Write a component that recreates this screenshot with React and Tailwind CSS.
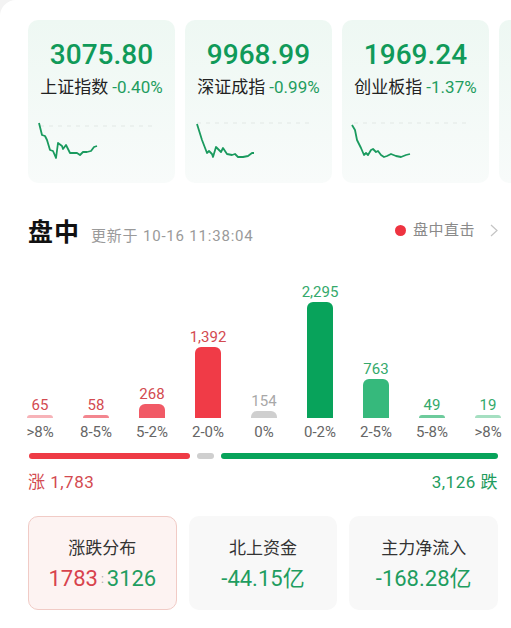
const indices = [
  {
    value: '3075.80',
    name: '上证指数',
    change: '-0.40%',
    dash: 8,
    points: '3,5 6,17 9,18 11,22 14,32 17,33 20,40 22,25 26,28 27,31 30,27 34,35 37,35 41,35 44,37 47,34 51,34 55,33 58,29 61,28',
  },
  {
    value: '9968.99',
    name: '深证成指',
    change: '-0.99%',
    dash: 5,
    points: '4,6 9,22 14,35 16,33 19,36 20,39 23,29 25,31 28,34 30,30 34,36 39,37 42,36 45,39 50,39 55,38 59,35 61,35',
  },
  {
    value: '1969.24',
    name: '创业板指',
    change: '-1.37%',
    dash: 5,
    points: '2,7 5,12 7,22 11,30 14,37 16,35 18,37 21,32 23,31 26,34 28,33 31,37 34,39 37,38 41,36 46,38 51,39 56,37 60,36',
  },
]

const buckets = [
  { label: '>8%', count: '65', h: 3, bar: 'bg-[#f7b3b8]', text: 'text-[#d34a50]' },
  { label: '8-5%', count: '58', h: 3, bar: 'bg-[#f3868f]', text: 'text-[#d34a50]' },
  { label: '5-2%', count: '268', h: 14, bar: 'bg-[#f15a66]', text: 'text-[#d34a50]' },
  { label: '2-0%', count: '1,392', h: 71, bar: 'bg-[#f03b47]', text: 'text-[#d34a50]' },
  { label: '0%', count: '154', h: 7, bar: 'bg-[#cfcfcf]', text: 'text-[#a8a8a8]' },
  { label: '0-2%', count: '2,295', h: 116, bar: 'bg-[#08a35b]', text: 'text-[#34a96b]' },
  { label: '2-5%', count: '763', h: 39, bar: 'bg-[#36b97c]', text: 'text-[#34a96b]' },
  { label: '5-8%', count: '49', h: 3, bar: 'bg-[#6dcb9c]', text: 'text-[#34a96b]' },
  { label: '>8%', count: '19', h: 3, bar: 'bg-[#a5dfc1]', text: 'text-[#34a96b]' },
]

function IndexCard({ item }) {
  return (
    <div className="w-[147px] h-[163px] shrink-0 rounded-[10px] bg-gradient-to-b from-[#eef8f3] to-[#f8fbfa] pt-[21px] flex flex-col">
      <div className="text-center text-[28px] leading-[28px] font-medium text-[#109a59]">{item.value}</div>
      <div className="mt-[8px] text-center text-[17px] leading-[20px] whitespace-nowrap">
        <span className="text-[#222]">{item.name}</span>
        <span className="text-[#1f9d60] ml-[4px]">{item.change}</span>
      </div>
      <svg className="mt-[21px] ml-[8px]" width="130" height="45" viewBox="0 0 130 45">
        <line x1="4" y1={item.dash} x2="120" y2={item.dash} stroke="#e2e8e5" strokeWidth="1" strokeDasharray="4 5" />
        <polyline points={item.points} fill="none" stroke="#1a9a5e" strokeWidth="1.8" strokeLinejoin="round" />
      </svg>
    </div>
  )
}

export default function App() {
  return (
    <div
      className="w-[511px] h-[628px] bg-[#f3f3f3] overflow-hidden"
      style={{ fontFamily: "Roboto, 'Noto Sans CJK SC', sans-serif" }}
    >
      <div className="w-full h-full bg-white rounded-tl-[16px] pl-[28px] pr-[13px]">
        {/* index cards */}
        <div className="pt-[20px] flex gap-[10px] -mr-[13px] overflow-hidden">
          {indices.map(item => <IndexCard key={item.name} item={item} />)}
          <div className="w-[147px] h-[163px] shrink-0 rounded-[10px] bg-gradient-to-b from-[#eef8f3] to-[#f8fbfa]" />
        </div>

        {/* header */}
        <div className="mt-[35px] h-[30px] flex items-center justify-between">
          <div className="flex items-baseline">
            <span className="text-[25px] leading-[30px] font-bold text-[#111] tracking-[1px]">盘中</span>
            <span className="ml-[11px] text-[15px] text-[#9a9a9a] tracking-[0.8px]">更新于 10-16 11:38:04</span>
          </div>
          <div className="flex items-center -mt-[6px]">
            <span className="w-[11px] h-[11px] rounded-full bg-[#ee3340]" />
            <span className="ml-[7px] text-[15px] text-[#8a8a8a] tracking-[0.5px]">盘中直击</span>
            <svg className="ml-[15px]" width="8" height="13" viewBox="0 0 8 13">
              <path d="M1 1 L7 6.5 L1 12" fill="none" stroke="#c4c4c4" strokeWidth="1.2" />
            </svg>
          </div>
        </div>

        {/* distribution chart */}
        <div className="mt-[13px] h-[179px] -ml-[1px] -mr-[3px] flex items-end justify-between">
          {buckets.map((b, i) => (
            <div key={i} className="w-[26px] flex flex-col items-center">
              <span className={`text-[15px] leading-[16px] whitespace-nowrap mb-[2px] ${b.text}`}>{b.count}</span>
              <div className={`w-[26px] rounded-t-[6px] ${b.bar}`} style={{ height: b.h }} />
              <span className="mt-[6px] text-[15px] leading-[16px] whitespace-nowrap text-[#666]">{b.label}</span>
            </div>
          ))}
        </div>

        {/* ratio bar */}
        <div className="mt-[13px] flex gap-[7px] ml-[1px]">
          <div className="w-[161px] h-[6px] rounded-full bg-[#ee3b45]" />
          <div className="w-[17px] h-[6px] rounded-full bg-[#cfcfcf]" />
          <div className="flex-1 h-[6px] rounded-full bg-[#07a35a]" />
        </div>
        <div className="mt-[13px] flex justify-between text-[17px] leading-[20px] tracking-[0.5px]">
          <span className="text-[#d34a50]">涨 1,783</span>
          <span className="text-[#1f9d60]">3,126 跌</span>
        </div>

        {/* summary cards */}
        <div className="mt-[24px] grid grid-cols-3 gap-[12px]">
          <div className="h-[94px] rounded-[10px] bg-[#fdf3f2] border border-[#f1cbc6] pt-[20px] flex flex-col items-center">
            <span className="text-[17px] leading-[22px] text-[#333]">涨跌分布</span>
            <div className="mt-[7px] text-[22px] leading-[26px] flex items-center">
              <span className="text-[#d8434d]">1783</span>
              <span className="text-[12px] text-[#aaa] mx-[3px]">:</span>
              <span className="text-[#1f9d60]">3126</span>
            </div>
          </div>
          <div className="h-[94px] rounded-[10px] bg-[#f8f8f8] pt-[21px] flex flex-col items-center">
            <span className="text-[17px] leading-[22px] text-[#333]">北上资金</span>
            <span className="mt-[7px] text-[22px] leading-[26px] text-[#1f9d60]">-44.15亿</span>
          </div>
          <div className="h-[94px] rounded-[10px] bg-[#f8f8f8] pt-[21px] flex flex-col items-center">
            <span className="text-[17px] leading-[22px] text-[#333]">主力净流入</span>
            <span className="mt-[7px] text-[22px] leading-[26px] text-[#1f9d60]">-168.28亿</span>
          </div>
        </div>
      </div>
    </div>
  )
}
